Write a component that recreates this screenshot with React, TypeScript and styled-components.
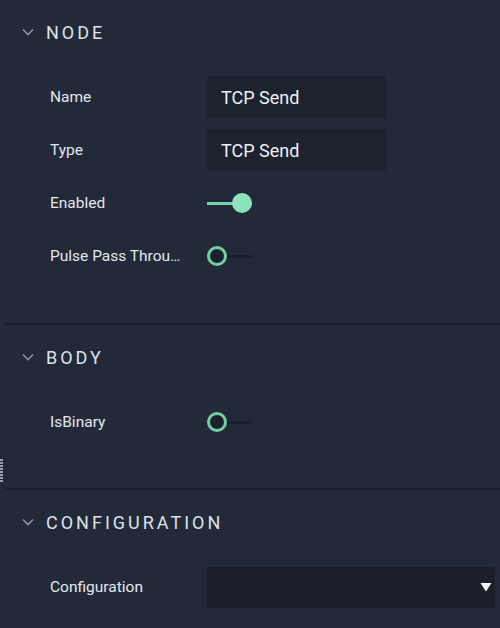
import React from "react";
import styled, { createGlobalStyle } from "styled-components";

const Global = createGlobalStyle`
  html, body { margin: 0; padding: 0; background: #222a39; }
  body { font-family: Roboto, "Liberation Sans", sans-serif; }
  * { box-sizing: border-box; }
`;

const Panel = styled.div`
  position: relative;
  width: 500px;
  height: 628px;
  overflow: hidden;
  background: #222a39;
  color: #e3e7ee;
`;

const Section = styled.section<{ $bottom: number }>`
  padding-bottom: ${(p) => p.$bottom}px;
`;

const Header = styled.div`
  height: 64px;
  display: flex;
  align-items: center;
  padding-left: 22px;
  gap: 12px;
`;

const Title = styled.span`
  font-size: 18px;
  font-weight: 400;
  letter-spacing: 3px;
  color: #dde2ea;
`;

const Rows = styled.div`
  display: flex;
  flex-direction: column;
  gap: 11px;
  padding-top: 12px;
  padding-left: 50px;
`;

const Row = styled.div`
  display: grid;
  grid-template-columns: 157px 1fr;
  align-items: center;
  height: 42px;
`;

const Label = styled.div`
  font-size: 15.5px;
  color: #e3e7ee;
  white-space: nowrap;
  overflow: hidden;
  text-overflow: ellipsis;
  max-width: 133px;
`;

const TextBox = styled.div`
  width: 179px;
  height: 42px;
  background: #1c222e;
  display: flex;
  align-items: center;
  padding-left: 14px;
  font-size: 18px;
  color: #eef1f5;
`;

const SelectBox = styled.div`
  width: 288px;
  height: 41px;
  background: #1b1f29;
  display: flex;
  align-items: center;
  justify-content: flex-end;
  padding-right: 3px;
`;

const Divider = styled.div`
  margin-left: 5px;
  height: 2px;
  background: #1b202a;
`;

const ToggleWrap = styled.div<{ $on: boolean }>`
  position: relative;
  width: 45px;
  height: 20px;
  &::before {
    content: "";
    position: absolute;
    left: 0;
    right: 0;
    top: 8.5px;
    height: 3px;
    background: ${(p) => (p.$on ? "#72d4a8" : "#1a1f29")};
  }
`;

const Knob = styled.div<{ $on: boolean }>`
  position: absolute;
  top: 0;
  width: 20px;
  height: 20px;
  border-radius: 50%;
  ${(p) =>
    p.$on
      ? `right: 0; background: #8ee2bd;`
      : `left: 0; background: #1c212c; border: 3px solid #72cfa2;`}
`;

const Handle = styled.div`
  position: absolute;
  left: 0;
  top: 459px;
  width: 3px;
  height: 24px;
  background: repeating-linear-gradient(
    to bottom,
    #9aa0aa 0px,
    #9aa0aa 2px,
    transparent 2px,
    transparent 3px
  );
`;

const Chevron = () => (
  <svg width="12" height="8" viewBox="0 0 12 8" fill="none">
    <path d="M1 1.5 L6 6.5 L11 1.5" stroke="#8a93a2" strokeWidth="1.6" />
  </svg>
);

const Arrow = () => (
  <svg width="12" height="10" viewBox="0 0 12 10">
    <polygon points="0.5,1 11.5,1 6,9.5" fill="#f2f4f7" />
  </svg>
);

const Toggle = ({ on }: { on: boolean }) => (
  <ToggleWrap $on={on}>
    <Knob $on={on} />
  </ToggleWrap>
);

const SectionHeader = ({ title }: { title: string }) => (
  <Header>
    <Chevron />
    <Title>{title}</Title>
  </Header>
);

export default function App() {
  return (
    <>
      <Global />
      <Panel>
        <Section $bottom={46}>
          <SectionHeader title="NODE" />
          <Rows>
            <Row>
              <Label>Name</Label>
              <TextBox>TCP Send</TextBox>
            </Row>
            <Row>
              <Label>Type</Label>
              <TextBox>TCP Send</TextBox>
            </Row>
            <Row>
              <Label>Enabled</Label>
              <Toggle on />
            </Row>
            <Row>
              <Label>Pulse Pass Through</Label>
              <Toggle on={false} />
            </Row>
          </Rows>
        </Section>
        <Divider />
        <Section $bottom={45}>
          <SectionHeader title="BODY" />
          <Rows>
            <Row>
              <Label>IsBinary</Label>
              <Toggle on={false} />
            </Row>
          </Rows>
        </Section>
        <Divider />
        <Section $bottom={0}>
          <SectionHeader title="CONFIGURATION" />
          <Rows>
            <Row>
              <Label>Configuration</Label>
              <SelectBox>
                <Arrow />
              </SelectBox>
            </Row>
          </Rows>
        </Section>
        <Handle />
      </Panel>
    </>
  );
}
